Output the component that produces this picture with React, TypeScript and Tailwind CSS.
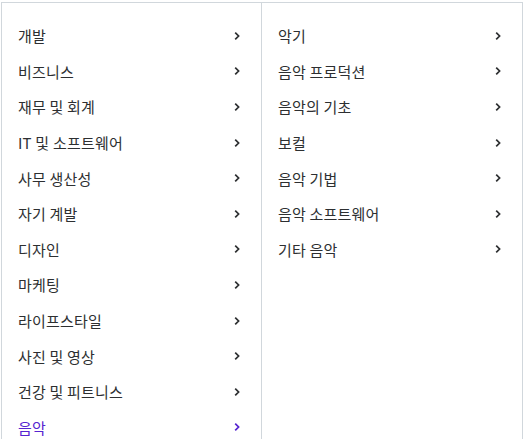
const left = [
  '개발',
  '비즈니스',
  '재무 및 회계',
  'IT 및 소프트웨어',
  '사무 생산성',
  '자기 계발',
  '디자인',
  '마케팅',
  '라이프스타일',
  '사진 및 영상',
  '건강 및 피트니스',
  '음악',
]

const right = ['악기', '음악 프로덕션', '음악의 기초', '보컬', '음악 기법', '음악 소프트웨어', '기타 음악']

function Chevron() {
  return (
    <svg width="16" height="16" viewBox="0 0 16 16" className="shrink-0">
      <path d="M6.2 4.6 L9.6 8 L6.2 11.4" fill="none" stroke="currentColor" strokeWidth="1.7" />
    </svg>
  )
}

function Row({ label, active }: { label: string; active?: boolean }) {
  return (
    <li
      className={`flex items-center justify-between px-4 h-[35.6px] text-[15px] leading-[1.4] tracking-[0.2px] ${
        active ? 'text-[#5624d0]' : 'text-[#2d2f31]'
      }`}
    >
      <span>{label}</span>
      <Chevron />
    </li>
  )
}

export default function App() {
  return (
    <div className="w-[525px] h-[439px] bg-white overflow-hidden" style={{ fontFamily: '"Noto Sans CJK KR", "Noto Sans", sans-serif' }}>
      <div className="ml-px mt-[2px] w-[522px] h-[440px] flex border border-b-0 border-[#d1d7dc] bg-white">
        {/* categories */}
        <ul className="w-[260px] pt-[15px] border-r border-[#d1d7dc]">
          {left.map((l, i) => (
            <Row key={l} label={l} active={i === left.length - 1} />
          ))}
        </ul>
        {/* subcategories */}
        <ul className="flex-1 pt-[15px]">
          {right.map((r) => (
            <Row key={r} label={r} />
          ))}
        </ul>
      </div>
    </div>
  )
}
